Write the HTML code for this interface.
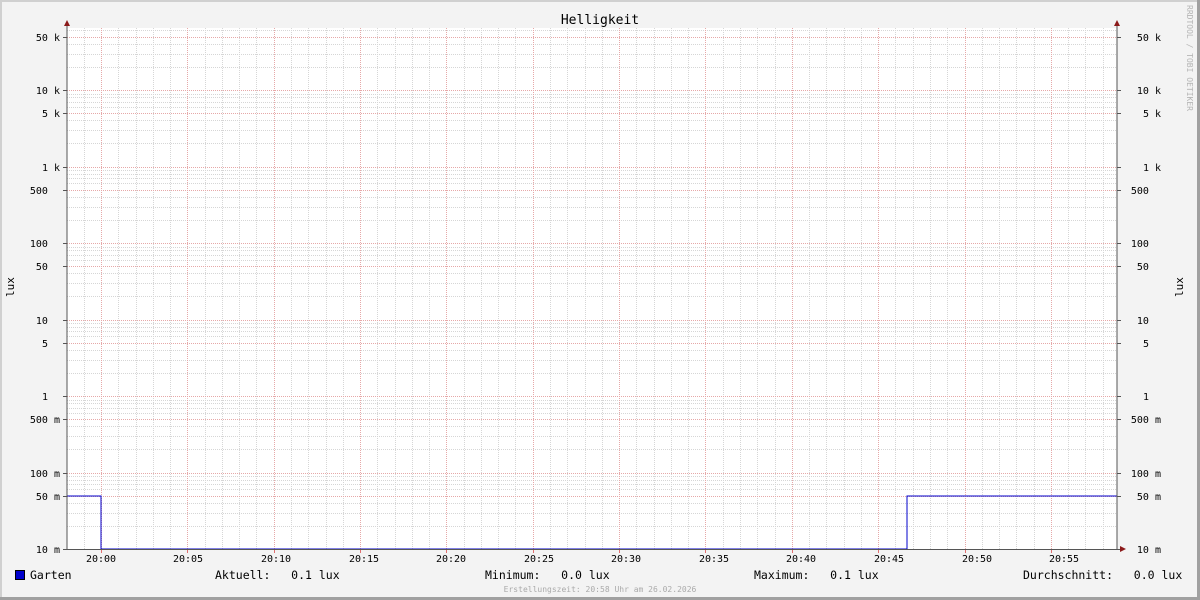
<!DOCTYPE html>
<html><head><meta charset="utf-8"><style>
html,body{margin:0;padding:0;background:#f3f3f3}
svg{display:block}
text{font-family:"DejaVu Sans Mono","Liberation Mono",monospace;white-space:pre}
#grid line{shape-rendering:crispEdges}
</style></head><body>
<svg id="s" width="1200" height="600" xmlns="http://www.w3.org/2000/svg" xml:space="preserve">
<rect x="0" y="0" width="1200" height="600" fill="#f3f3f3"/>
<rect x="0" y="0" width="1200" height="2" fill="#d0d0d0"/>
<rect x="0" y="0" width="2" height="600" fill="#d0d0d0"/>
<rect x="0" y="597" width="1200" height="3" fill="#a0a0a0"/>
<rect x="1197" y="0" width="3" height="600" fill="#a0a0a0"/>
<rect x="67" y="28" width="1050" height="521" fill="#fff"/>
<g id="grid"></g>
<polyline points="67,496 101,496 101,549 907,549 907,496 1117,496" fill="none" stroke="#0000cc" stroke-width="1"/>
<line x1="67" y1="22" x2="67" y2="550" stroke="#555"/>
<line x1="1117" y1="22" x2="1117" y2="550" stroke="#555"/>
<line x1="63" y1="549.5" x2="1122" y2="549.5" stroke="#555"/>
<polygon points="64,26 70,26 67,20" fill="#8b1a1a"/>
<polygon points="1114,26 1120,26 1117,20" fill="#8b1a1a"/>
<polygon points="1120,546 1120,552 1126,549" fill="#8b1a1a"/>
<g font-size="10" fill="#000" text-anchor="end">
<text x="60" y="41">50 k</text><text x="60" y="94">10 k</text><text x="60" y="117">5 k</text>
<text x="60" y="171">1 k</text><text x="60" y="194">500  </text><text x="60" y="247">100  </text>
<text x="60" y="270">50  </text><text x="60" y="324">10  </text><text x="60" y="347">5  </text>
<text x="60" y="400">1  </text><text x="60" y="423">500 m</text><text x="60" y="477">100 m</text>
<text x="60" y="500">50 m</text><text x="60" y="553">10 m</text>
<text x="1161" y="41">50 k</text><text x="1161" y="94">10 k</text><text x="1161" y="117">5 k</text>
<text x="1161" y="171">1 k</text><text x="1161" y="194">500  </text><text x="1161" y="247">100  </text>
<text x="1161" y="270">50  </text><text x="1161" y="324">10  </text><text x="1161" y="347">5  </text>
<text x="1161" y="400">1  </text><text x="1161" y="423">500 m</text><text x="1161" y="477">100 m</text>
<text x="1161" y="500">50 m</text><text x="1161" y="553">10 m</text>
</g>
<g font-size="10" fill="#000" text-anchor="middle">
<text x="101" y="562">20:00</text><text x="188" y="562">20:05</text><text x="276" y="562">20:10</text>
<text x="364" y="562">20:15</text><text x="451" y="562">20:20</text><text x="539" y="562">20:25</text>
<text x="626" y="562">20:30</text><text x="714" y="562">20:35</text><text x="801" y="562">20:40</text>
<text x="889" y="562">20:45</text><text x="977" y="562">20:50</text><text x="1064" y="562">20:55</text>
</g>
<text x="600" y="24" font-size="13" text-anchor="middle" fill="#000">Helligkeit</text>
<text x="14" y="287" font-size="11" text-anchor="middle" transform="rotate(-90 14 287)">lux</text>
<text x="1183" y="287" font-size="11" text-anchor="middle" transform="rotate(-90 1183 287)">lux</text>
<text x="1187" y="5" font-size="8" fill="#b5b5b5" transform="rotate(90 1187 5)">RRDTOOL / TOBI OETIKER</text>
<rect x="15.5" y="570.5" width="9" height="9" fill="#0000cc" stroke="#000"/>
<g font-size="11.5" fill="#000">
<text x="30" y="579">Garten</text>
<text x="215" y="579">Aktuell:   0.1 lux</text>
<text x="485" y="579">Minimum:   0.0 lux</text>
<text x="754" y="579">Maximum:   0.1 lux</text>
<text x="1023" y="579">Durchschnitt:   0.0 lux</text>
</g>
<text x="600" y="592" font-size="8" fill="#aaa" text-anchor="middle">Erstellungszeit: 20:58 Uhr am 26.02.2026</text>
</svg>
<script>
var g=document.getElementById('grid'),minor='',major='';
function L(x1,y1,x2,y2,c){return '<line x1="'+x1+'" y1="'+y1+'" x2="'+x2+'" y2="'+y2+'" stroke="'+c+'" stroke-width="1" stroke-dasharray="1,1"/>';}
for(var m=-2;m<=58;m++){var x=Math.round(101+m*17.27)+0.5;if(x<=67||x>=1117)continue;
 var maj=(((m%5)+5)%5==0);
 if(maj){major+=L(x,28,x,549,'#e6a8a8')+'<line x1="'+x+'" y1="549" x2="'+x+'" y2="553" stroke="#e07070"/>';}
 else minor+=L(x,28,x,549,'#d6d6d6');}
for(var d=-2;d<=5;d++){for(var k=1;k<=9;k++){var v=k*Math.pow(10,d);var y=549-76.5*(Math.log10(v)+2);
 if(y<28||y>=549)continue;y=Math.round(y)+0.5;var maj=(k==1||k==5);
 if(maj){major+=L(67,y,1117,y,'#e6a8a8')+'<line x1="63" y1="'+y+'" x2="67" y2="'+y+'" stroke="#555"/><line x1="1117" y1="'+y+'" x2="1121" y2="'+y+'" stroke="#555"/>';}
 else minor+=L(67,y,1117,y,'#d6d6d6');}}
g.innerHTML=minor+major;
</script>
</body></html>
